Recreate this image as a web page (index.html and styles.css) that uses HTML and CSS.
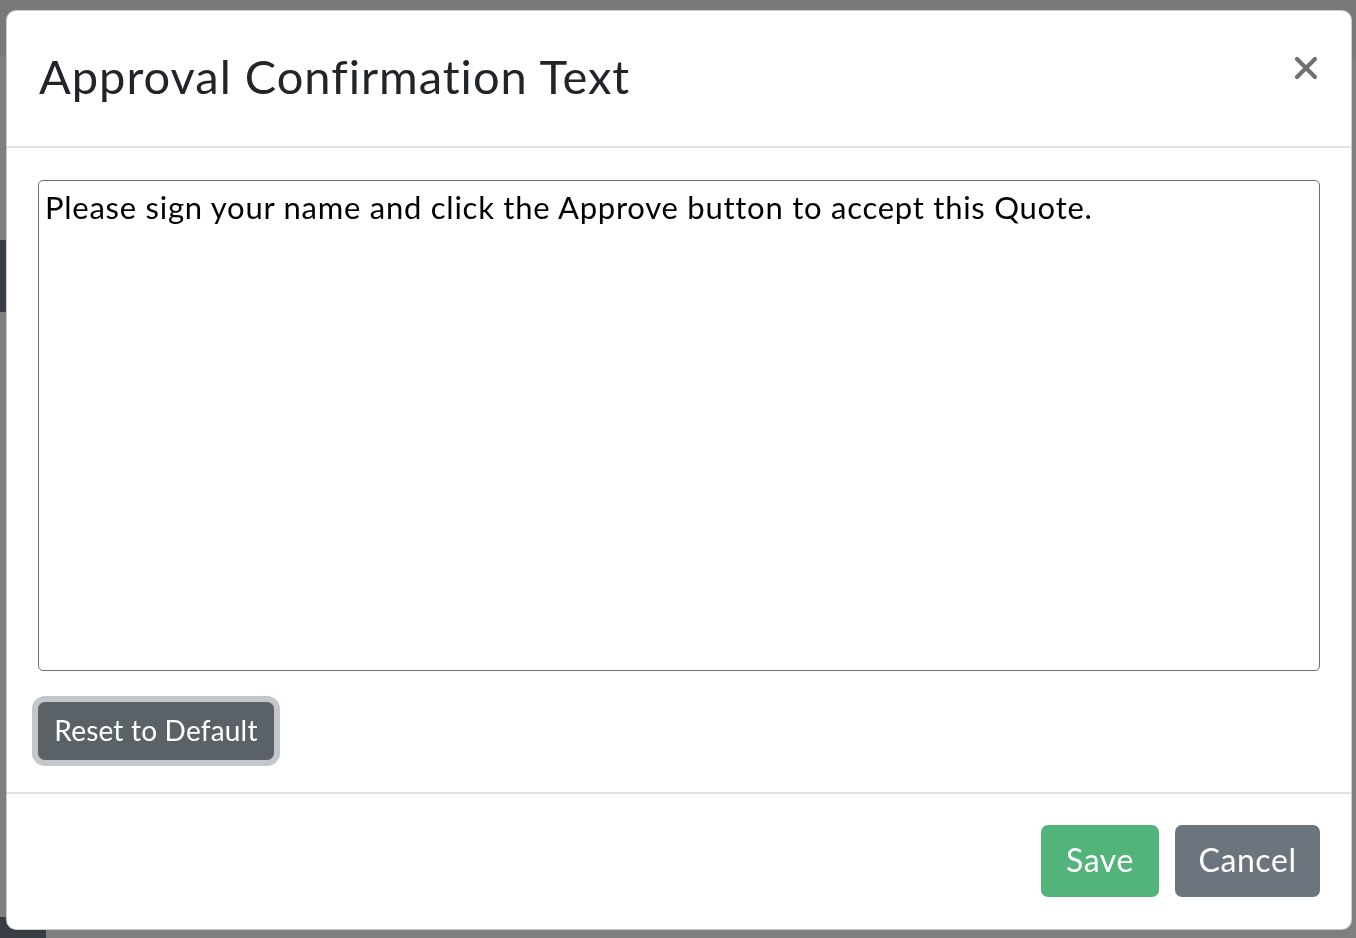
FILE: index.html
```html
<!DOCTYPE html>
<html lang="en">

<head>
    <meta charset="UTF-8">
    <title>Approval Confirmation Text</title>
    <link rel="stylesheet" href="styles.css">
</head>

<body>
    <div class="page">
        <div class="page-topbar"></div>
        <div class="page-side">
            <span class="ghost g1">e</span>
            <div class="side-block"></div>
            <span class="ghost g2">e</span>
            <span class="ghost g3">d</span>
            <span class="ghost g4">.</span>
        </div>
        <div class="page-foot"></div>
    </div>

    <div class="backdrop">
        <div class="modal">
            <div class="modal-header">
                <h5 class="modal-title">Approval Confirmation Text</h5>
                <button class="close" aria-label="Close">
                    <svg width="24" height="24" viewBox="0 0 24 24">
                        <path d="M3 3 L21 21 M21 3 L3 21" stroke="#717171" stroke-width="4.2" stroke-linecap="round" fill="none" />
                    </svg>
                </button>
            </div>

            <div class="modal-body">
                <textarea class="text-input">Please sign your name and click the Approve button to accept this Quote.</textarea>
                <div class="reset-row">
                    <button class="btn btn-dark-focus">Reset to Default</button>
                </div>
            </div>

            <div class="modal-footer">
                <button class="btn btn-success">Save</button>
                <button class="btn btn-secondary">Cancel</button>
            </div>
        </div>
    </div>
</body>

</html>
```

FILE: styles.css
```css
* {
    box-sizing: border-box;
}

body {
    margin: 0;
    font-family: 'Lato', 'Noto Sans', sans-serif;
    font-variant-ligatures: none;
    background: #ffffff;
    min-height: 100vh;
    overflow: hidden;
}

/* page behind the dialog */
.page {
    position: fixed;
    inset: 0;
}

.page-topbar {
    height: 57px;
    background: #f2f2f2;
}

.page-side {
    position: relative;
    height: 860px;
}

.side-block {
    position: absolute;
    left: 0;
    top: 183px;
    width: 60px;
    height: 72px;
    background: #6f7a84;
}

.ghost {
    position: absolute;
    left: -18px;
    font-size: 30px;
    color: #222;
}

.g1 { top: 58px; }
.g2 { top: 338px; }
.g3 { top: 468px; }
.g4 { top: 600px; }

.page-foot {
    position: absolute;
    left: 0;
    bottom: 0;
    width: 46px;
    height: 21px;
    background: #6f7a84;
}

/* dialog */
.backdrop {
    position: fixed;
    inset: 0;
    background: rgba(0, 0, 0, 0.5);
    padding: 10px 4px 8px 6px;
}

.modal {
    background: #ffffff;
    width: 1346px;
    height: 920px;
    border: 1px solid rgba(0, 0, 0, 0.2);
    border-radius: 10px;
    display: flex;
    flex-direction: column;
}

.modal-header {
    display: flex;
    justify-content: space-between;
    align-items: flex-start;
    height: 137px;
    padding: 0 33px 0 32px;
    border-bottom: 2px solid #dee2e6;
}

.modal-title {
    margin: 0;
    margin-top: 37px;
    font-size: 47px;
    font-weight: 400;
    line-height: 56px;
    letter-spacing: 1px;
    color: #212529;
}

.close {
    margin-top: 45px;
    padding: 0;
    border: none;
    background: none;
    cursor: pointer;
}

.modal-body {
    padding: 32px 31px 32px 31px;
    flex: 0 0 auto;
}

.text-input {
    display: block;
    width: 1282px;
    height: 491px;
    margin: 0;
    padding: 6px 6px;
    border: 1.5px solid #6f6f6f;
    border-radius: 5px;
    font-family: 'Lato', 'Noto Sans', sans-serif;
    font-variant-ligatures: none;
    font-size: 31px;
    line-height: 40px;
    letter-spacing: 0.75px;
    color: #000000;
    resize: none;
}

.reset-row {
    margin-top: 31px;
}

.btn {
    border: none;
    border-radius: 7px;
    font-family: 'Lato', 'Noto Sans', sans-serif;
    font-variant-ligatures: none;
    color: #ffffff;
    cursor: pointer;
}

.btn-dark-focus {
    width: 236px;
    height: 58px;
    padding-bottom: 4px;
    font-size: 28px;
    letter-spacing: 0.2px;
    background: #5a6268;
    box-shadow: 0 0 0 6px #c3c6ca;
}

.modal-footer {
    display: flex;
    justify-content: flex-end;
    gap: 16px;
    padding: 31px 31px;
    border-top: 2px solid #dee2e6;
    flex: 1;
}

.btn-success,
.btn-secondary {
    height: 72px;
    padding-bottom: 4px;
    font-size: 32px;
    letter-spacing: 0.6px;
}

.btn-success {
    width: 118px;
    background: #52b47a;
}

.btn-secondary {
    width: 145px;
    background: #6c757d;
}
```
